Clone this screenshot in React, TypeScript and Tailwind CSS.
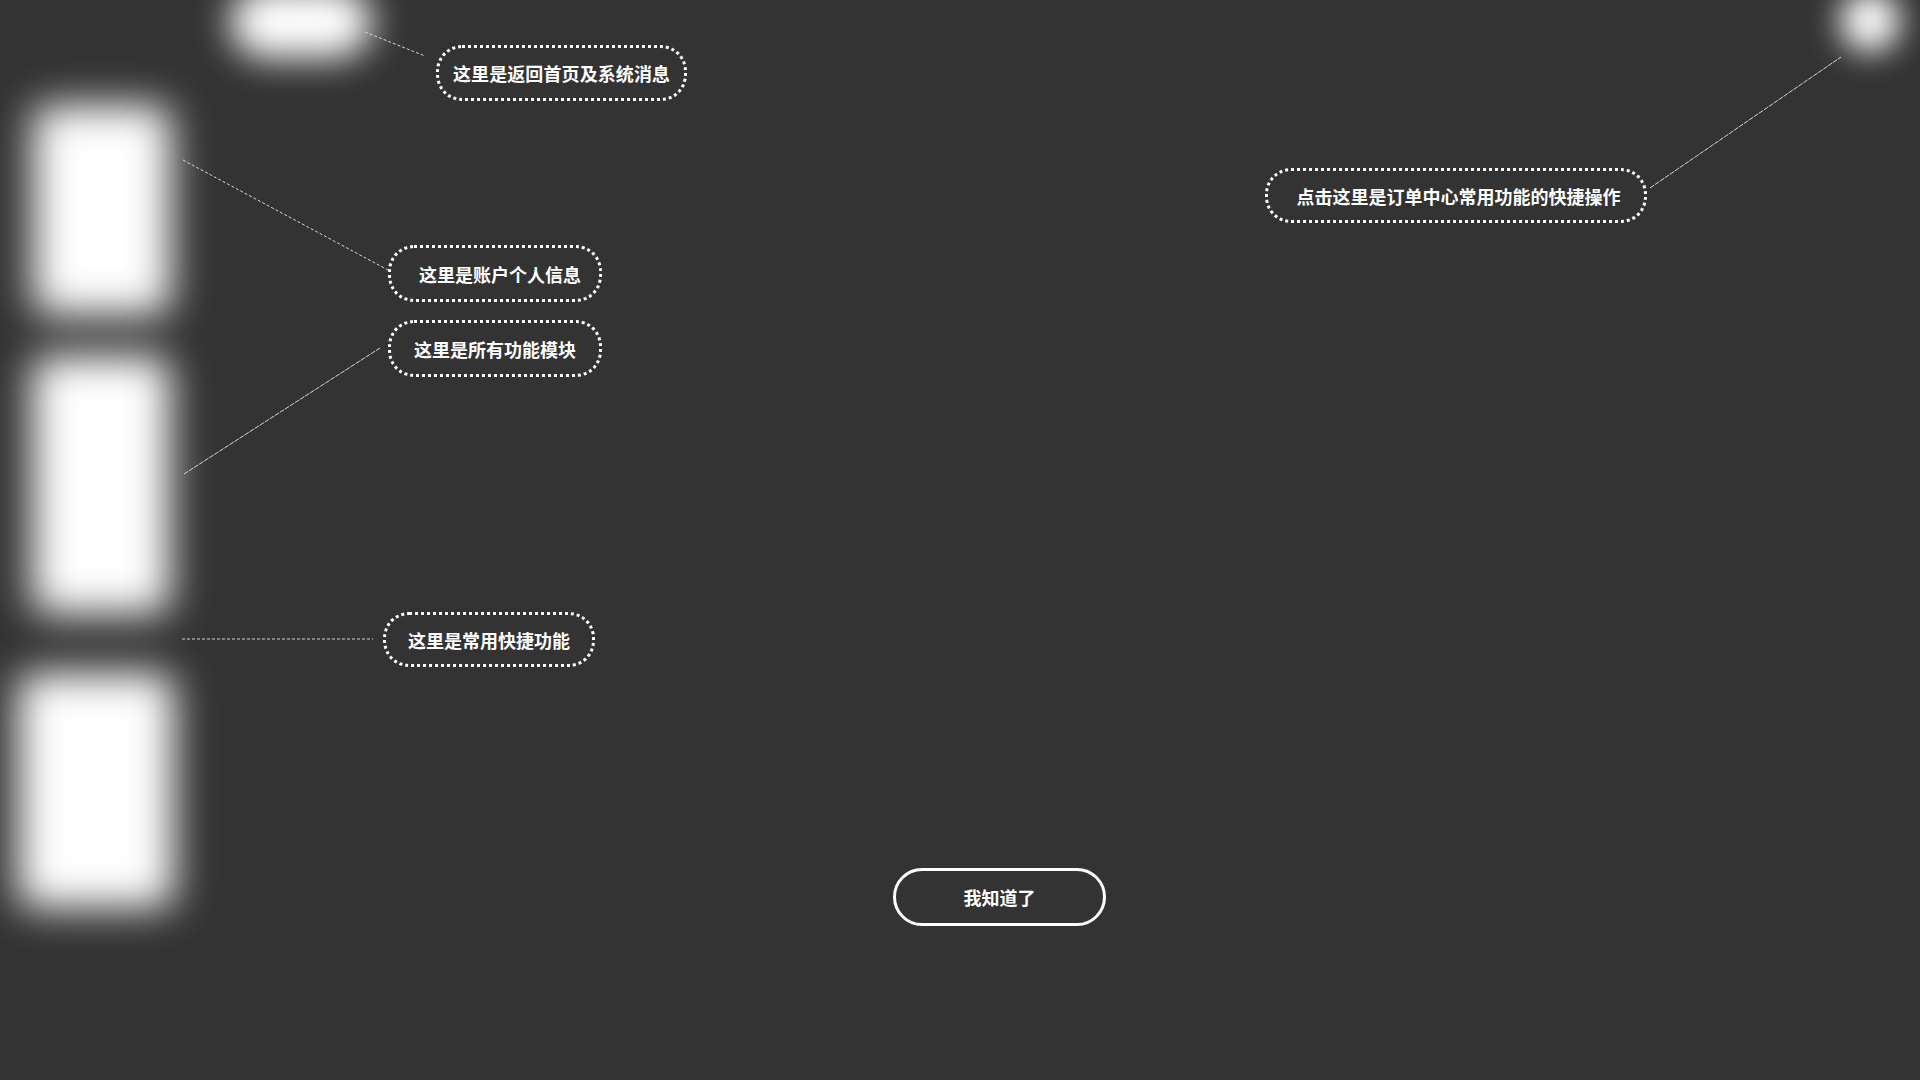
import React from "react";

type Tip = {
  text: string;
  box: string;
  label: string;
};

// callouts of the onboarding overlay; label width spreads the glyphs like the design
const tips: Tip[] = [
  { text: "这里是返回首页及系统消息", box: "left-[436px] top-[45px] w-[251px] h-[56px]", label: "w-[217px]" },
  { text: "这里是账户个人信息", box: "left-[388px] top-[245px] w-[214px] h-[57px] pl-[10px]", label: "w-[162px]" },
  { text: "这里是所有功能模块", box: "left-[388px] top-[320px] w-[214px] h-[57px]", label: "w-[162px]" },
  { text: "这里是常用快捷功能", box: "left-[383px] top-[612px] w-[212px] h-[55px]", label: "w-[162px]" },
  { text: "点击这里是订单中心常用功能的快捷操作", box: "left-[1265px] top-[168px] w-[382px] h-[55px] pl-[5px]", label: "w-[324px]" },
];

const lines = [
  { x1: 365, y1: 32, x2: 425, y2: 56, dash: "3 2" },
  { x1: 183, y1: 160, x2: 388, y2: 270, dash: "3 2" },
  { x1: 184, y1: 474, x2: 380, y2: 348, dash: "5 1" },
  { x1: 182, y1: 639, x2: 373, y2: 639, dash: "3 2" },
  { x1: 1650, y1: 188, x2: 1841, y2: 57, dash: "5 1" },
];

function Spotlights() {
  return (
    <>
      <div className="absolute left-[230px] top-[-14px] w-[142px] h-[72px] rounded-full bg-white blur-[18px]" />
      <div className="absolute left-[1840px] top-[-10px] w-[60px] h-[62px] rounded-full bg-white blur-[16px]" />
      <div className="absolute left-[33px] top-[105px] w-[138px] h-[210px] rounded-[16px] bg-white blur-[20px]" />
      <div className="absolute left-[32px] top-[356px] w-[138px] h-[258px] rounded-[16px] bg-white blur-[20px]" />
      <div className="absolute left-[18px] top-[673px] w-[156px] h-[235px] rounded-[16px] bg-white blur-[20px]" />
    </>
  );
}

export default function App() {
  return (
    <div className="relative w-full h-[1080px] overflow-hidden bg-[#333333] font-['Noto_Sans_CJK_SC','Noto_Sans',sans-serif]">
      <Spotlights />

      <svg className="absolute inset-0 pointer-events-none" width="1920" height="1080">
        {lines.map((l, i) => (
          <line key={i} x1={l.x1} y1={l.y1} x2={l.x2} y2={l.y2} stroke="#d4d4d4" strokeWidth="1" strokeDasharray={l.dash} />
        ))}
      </svg>

      {tips.map((t) => (
        <div
          key={t.text}
          className={`absolute flex items-center justify-center rounded-[26px] border-[3px] border-dotted border-white ${t.box}`}
        >
          <span className={`inline-block whitespace-nowrap text-[18px] font-bold leading-none text-white [text-align-last:justify] ${t.label}`}>
            {t.text}
          </span>
        </div>
      ))}

      <button className="absolute left-[893px] top-[868px] w-[213px] h-[58px] flex items-center justify-center rounded-[29px] border-[3px] border-white">
        <span className="text-[18px] font-bold leading-none text-white">我知道了</span>
      </button>
    </div>
  );
}
